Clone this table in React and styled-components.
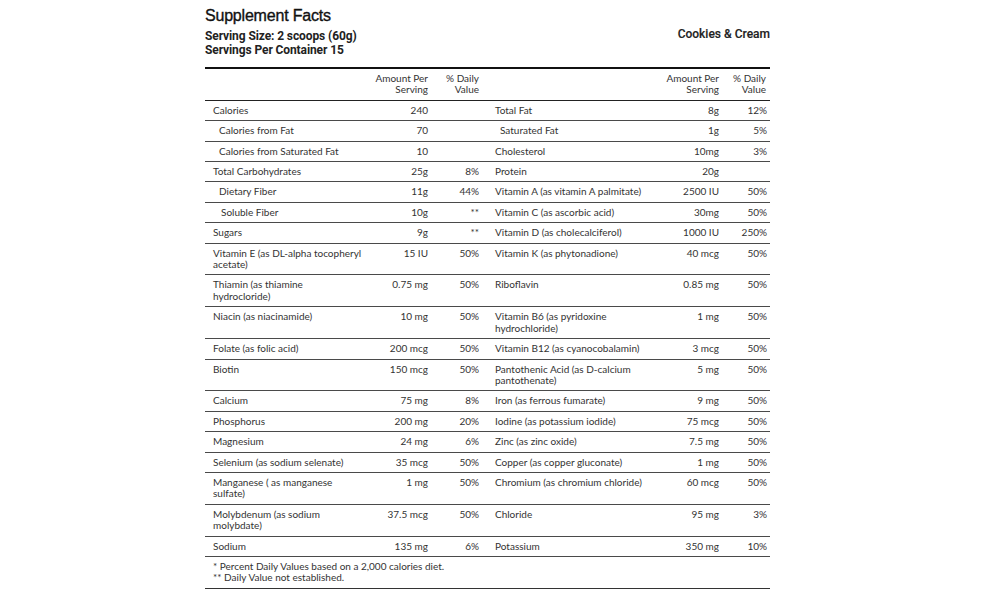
import React from 'react'
import styled, { createGlobalStyle } from 'styled-components'

const GlobalStyle = createGlobalStyle`
  html, body {
    margin: 0;
    padding: 0;
    background: #ffffff;
  }
`

const Page = styled.div`
  width: 565px;
  margin-left: 205px;
  padding-top: 6px;
  font-family: Lato, "Liberation Sans", sans-serif;
  color: #333;
`

const Header = styled.div`
  display: flex;
  justify-content: space-between;
  align-items: flex-start;
  padding-bottom: 10px;
`

const Title = styled.h1`
  margin: 0 0 3px;
  font-family: "Liberation Sans", Arial, sans-serif;
  font-size: 16px;
  line-height: 20px;
  font-weight: 400;
  color: #111;
  letter-spacing: -0.2px;
  -webkit-text-stroke: 0.35px #111;
`

const Serving = styled.div`
  font-family: Roboto, "Liberation Sans", sans-serif;
  font-size: 12px;
  line-height: 14px;
  font-weight: 700;
  color: #222;
  letter-spacing: -0.1px;
`

const Flavor = styled.div`
  padding-top: 21px;
  font-family: Roboto, "Liberation Sans", sans-serif;
  font-size: 12px;
  line-height: 14px;
  font-weight: 500;
  color: #222;
  -webkit-text-stroke: 0.15px #222;
`

const Table = styled.table`
  width: 565px;
  border-collapse: collapse;
  table-layout: fixed;
  border-top: 2px solid #111;
  border-bottom: 1px solid #333;
  font-size: 10px;
  line-height: 11.4px;
`

const Row = styled.tr`
  border-bottom: 1px solid ${p => (p.$head ? '#222' : '#4a4a4a')};
`

const Cell = styled.td`
  padding: 4px ${p => p.$pr || 0}px 4px 0;
  text-align: ${p => (p.$right ? 'right' : 'left')};
  vertical-align: top;
  font-weight: 400;
  color: #333;
`

const Name = styled(Cell)`
  padding-left: ${p => 8 + (p.$indent || 0)}px;
  padding-right: 4px;
  white-space: pre-line;
`

const Note = styled.td`
  padding: 4px 8px 4px;
  color: #333;
`

const rows = [
  ['Calories', 0, '240', '', 'Total Fat', 0, '8g', '12%'],
  ['Calories from Fat', 6, '70', '', 'Saturated Fat', 5, '1g', '5%'],
  ['Calories from Saturated Fat', 6, '10', '', 'Cholesterol', 0, '10mg', '3%'],
  ['Total Carbohydrates', 0, '25g', '8%', 'Protein', 0, '20g', ''],
  ['Dietary Fiber', 6, '11g', '44%', 'Vitamin A (as vitamin A palmitate)', 0, '2500 IU', '50%'],
  ['Soluble Fiber', 8, '10g', '**', 'Vitamin C (as ascorbic acid)', 0, '30mg', '50%'],
  ['Sugars', 0, '9g', '**', 'Vitamin D (as cholecalciferol)', 0, '1000 IU', '250%'],
  ['Vitamin E (as DL-alpha tocopheryl acetate)', 0, '15 IU', '50%', 'Vitamin K (as phytonadione)', 0, '40 mcg', '50%'],
  ['Thiamin (as thiamine\nhydrocloride)', 0, '0.75 mg', '50%', 'Riboflavin', 0, '0.85 mg', '50%'],
  ['Niacin (as niacinamide)', 0, '10 mg', '50%', 'Vitamin B6 (as pyridoxine hydrochloride)', 0, '1 mg', '50%'],
  ['Folate (as folic acid)', 0, '200 mcg', '50%', 'Vitamin B12 (as cyanocobalamin)', 0, '3 mcg', '50%'],
  ['Biotin', 0, '150 mcg', '50%', 'Pantothenic Acid (as D-calcium pantothenate)', 0, '5 mg', '50%'],
  ['Calcium', 0, '75 mg', '8%', 'Iron (as ferrous fumarate)', 0, '9 mg', '50%'],
  ['Phosphorus', 0, '200 mg', '20%', 'Iodine (as potassium iodide)', 0, '75 mcg', '50%'],
  ['Magnesium', 0, '24 mg', '6%', 'Zinc (as zinc oxide)', 0, '7.5 mg', '50%'],
  ['Selenium (as sodium selenate)', 0, '35 mcg', '50%', 'Copper (as copper gluconate)', 0, '1 mg', '50%'],
  ['Manganese ( as manganese sulfate)', 0, '1 mg', '50%', 'Chromium (as chromium chloride)', 0, '60 mcg', '50%'],
  ['Molybdenum (as sodium molybdate)', 0, '37.5 mcg', '50%', 'Chloride', 0, '95 mg', '3%'],
  ['Sodium', 0, '135 mg', '6%', 'Potassium', 0, '350 mg', '10%'],
]

const App = () => (
  <>
    <GlobalStyle />
    <Page>
      <Header>
        <div>
          <Title>Supplement Facts</Title>
          <Serving>Serving Size: 2 scoops (60g)</Serving>
          <Serving>Servings Per Container 15</Serving>
        </div>
        <Flavor>Cookies &amp; Cream</Flavor>
      </Header>
      <Table>
        <colgroup>
          <col style={{ width: 163 }} />
          <col style={{ width: 68 }} />
          <col style={{ width: 51 }} />
          <col style={{ width: 173 }} />
          <col style={{ width: 67 }} />
          <col style={{ width: 43 }} />
        </colgroup>
        <thead>
          <Row $head>
            <Name />
            <Cell $right $pr={8}>Amount Per<br />Serving</Cell>
            <Cell $right $pr={8}>% Daily<br />Value</Cell>
            <Name />
            <Cell $right $pr={8}>Amount Per<br />Serving</Cell>
            <Cell $right $pr={4}>% Daily<br />Value</Cell>
          </Row>
        </thead>
        <tbody>
          {rows.map(([ln, li, la, ld, rn, ri, ra, rd]) => (
            <Row key={ln}>
              <Name $indent={li}>{ln}</Name>
              <Cell $right $pr={8}>{la}</Cell>
              <Cell $right $pr={8}>{ld}</Cell>
              <Name $indent={ri}>{rn}</Name>
              <Cell $right $pr={8}>{ra}</Cell>
              <Cell $right $pr={3}>{rd}</Cell>
            </Row>
          ))}
          <tr>
            <Note colSpan={6}>
              * Percent Daily Values based on a 2,000 calories diet.<br />
              ** Daily Value not established.
            </Note>
          </tr>
        </tbody>
      </Table>
    </Page>
  </>
)

export default App
